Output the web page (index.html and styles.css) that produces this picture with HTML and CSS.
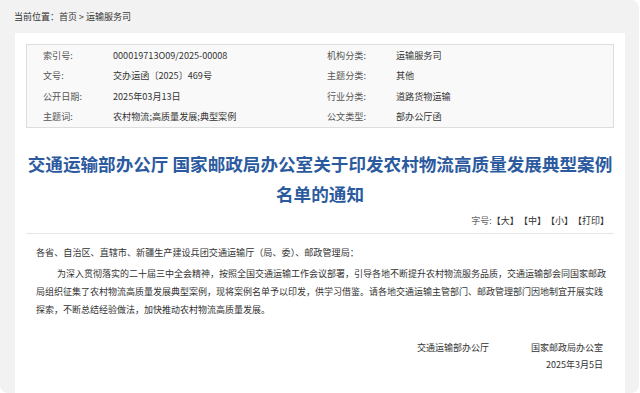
FILE: index.html
```html
<!DOCTYPE html>
<html lang="zh-CN">
<head>
    <meta charset="UTF-8">
    <meta name="viewport" content="width=device-width, initial-scale=1.0">
    <title>交通运输部办公厅 国家邮政局办公室关于印发农村物流高质量发展典型案例名单的通知</title>
    <link rel="stylesheet" href="styles.css">
</head>
<body>
    <div class="panel">
        <div class="crumb">当前位置：<a href="#">首页</a> &gt; <a href="#">运输服务司</a></div>
        <div class="card">
            <div class="meta">
                <span class="label">索引号:</span><span>000019713O09/2025-00008</span>
                <span class="label">机构分类:</span><span>运输服务司</span>
                <span class="label">文号:</span><span>交办运函〔2025〕469号</span>
                <span class="label">主题分类:</span><span>其他</span>
                <span class="label">公开日期:</span><span>2025年03月13日</span>
                <span class="label">行业分类:</span><span>道路货物运输</span>
                <span class="label">主题词:</span><span>农村物流;高质量发展;典型案例</span>
                <span class="label">公文类型:</span><span>部办公厅函</span>
            </div>
            <h1 class="title">交通运输部办公厅 国家邮政局办公室关于印发农村物流高质量发展典型案例名单的通知</h1>
            <div class="tools">
                <span class="tools-label">字号:</span>
                <a href="#">【大】</a>
                <a href="#">【中】</a>
                <a href="#">【小】</a>
                <a href="#">【打印】</a>
            </div>
            <div class="content">
                <p class="to">各省、自治区、直辖市、新疆生产建设兵团交通运输厅（局、委）、邮政管理局：</p>
                <p class="para">为深入贯彻落实的二十届三中全会精神，按照全国交通运输工作会议部署，引导各地不断提升农村物流服务品质，交通运输部会同国家邮政局组织征集了农村物流高质量发展典型案例，现将案例名单予以印发，供学习借鉴。请各地交通运输主管部门、邮政管理部门因地制宜开展实践探索，不断总结经验做法，加快推动农村物流高质量发展。</p>
                <div class="sign">
                    <div class="sign-names">
                        <span>交通运输部办公厅</span>
                        <span>国家邮政局办公室</span>
                    </div>
                    <div class="sign-date">2025年3月5日</div>
                </div>
            </div>
        </div>
    </div>
</body>
</html>
```

FILE: styles.css
```css
body {
    margin: 0;
    padding: 0;
    background: #fff;
    color: #333;
    font-family: "Noto Sans CJK SC", "Noto Sans", sans-serif;
    font-size: 9.1px;
}
a {
    color: #333;
    text-decoration: none;
}
.panel {
    width: 639px;
    height: 393px;
    background: #f2f2f2;
    border-radius: 0 8px 8px 8px;
    overflow: hidden;
    display: flex;
    flex-direction: column;
}
.crumb {
    height: 33px;
    line-height: 33px;
    padding-left: 14px;
    font-size: 9px;
}
.card {
    flex: 1;
    margin: 0 14px 0 15px;
    padding: 11px 11px 0 11px;
    background: #fff;
}
.meta {
    display: grid;
    grid-template-columns: 70px 214px 69px 1fr;
    grid-auto-rows: 20.5px;
    align-items: center;
    padding: 0 16px;
    border: 1px solid #ddd;
    background: #f9f9f9;
    line-height: 1;
}
.meta .label {
    color: #555;
}
.title {
    margin: 21px 0 0;
    font-size: 17.6px;
    line-height: 30px;
    font-weight: bold;
    color: #2c5a9e;
    text-align: center;
}
.tools {
    margin-top: 4px;
    padding: 0 5px 4px 0;
    line-height: 16px;
    text-align: right;
    font-size: 9px;
    border-bottom: 1px solid #e6e6e6;
}
.tools-label {
    color: #666;
}
.tools a {
    margin-left: -2px;
}
.content {
    padding: 9px 3px 0 10px;
}
.content p {
    margin: 0;
    line-height: 18px;
}
.to {
    margin-bottom: 4px !important;
}
.para {
    font-size: 9px;
    text-indent: 21px;
}
.sign {
    margin-top: 20px;
    padding-right: 8px;
    text-align: right;
    font-size: 9px;
    line-height: 17px;
}
.sign-names {
    display: flex;
    justify-content: flex-end;
    gap: 42px;
}
```
